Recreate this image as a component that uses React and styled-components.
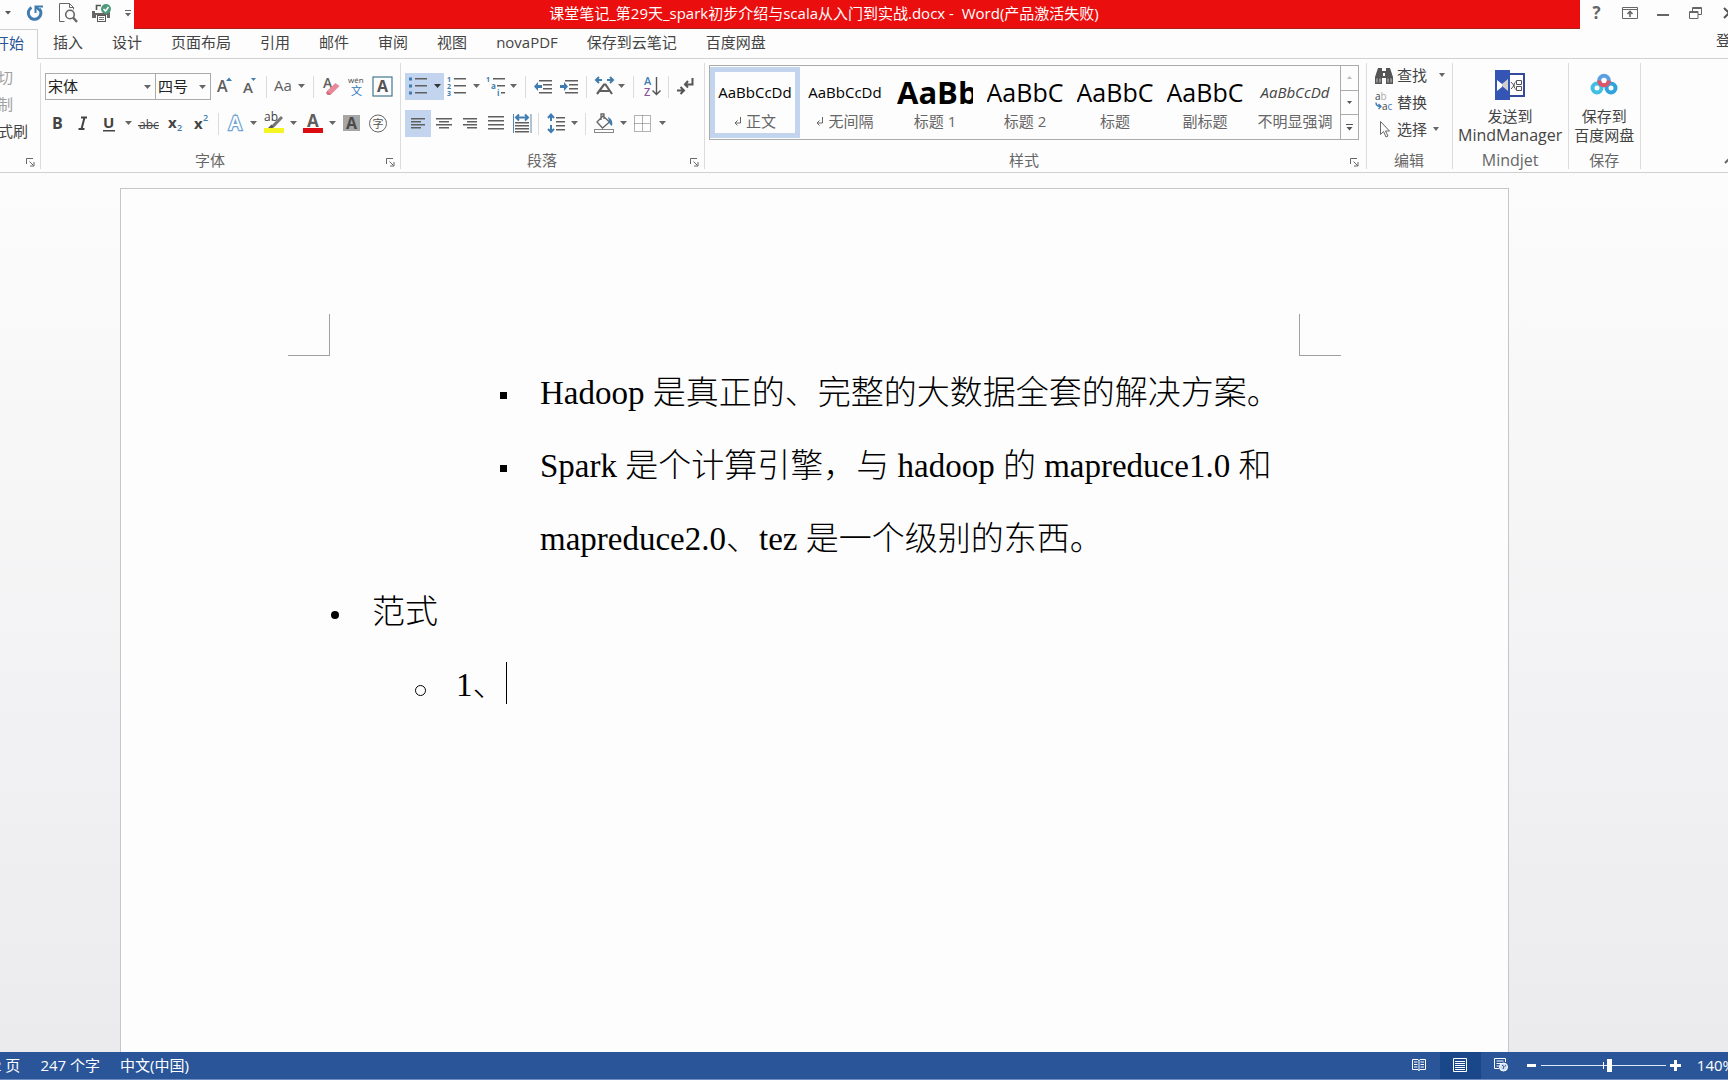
import React, { useState } from "react";
import styled, { createGlobalStyle } from "styled-components";

const GlobalStyle = createGlobalStyle`
  * {
    box-sizing: border-box;
  }
  body {
    margin: 0;
    overflow: hidden;
    font-family: "Open Sans", "Noto Sans CJK SC", sans-serif;
    font-size: 15px;
    line-height: 20px;
    color: #444;
    background: #fdfdfd;
  }
  button, select {
    font: inherit;
    color: inherit;
    margin: 0;
    padding: 0;
    border: 0;
    background: none;
  }
  svg {
    display: block;
    flex-shrink: 0;
  }
  svg text {
    font-family: "Open Sans", "Noto Sans CJK SC", sans-serif;
  }
`;

const BLUE = "#3f7cb0";
const GREY = "#5f5f5f";

const tabs = [
  "开始",
  "插入",
  "设计",
  "页面布局",
  "引用",
  "邮件",
  "审阅",
  "视图",
  "novaPDF",
  "保存到云笔记",
  "百度网盘",
];

const styleItems = [
  { name: "正文", sample: "AaBbCcDd", mark: true },
  { name: "无间隔", sample: "AaBbCcDd", mark: true },
  { name: "标题 1", sample: "AaBb", size: 31, bold: true },
  { name: "标题 2", sample: "AaBbC", size: 25 },
  { name: "标题", sample: "AaBbC", size: 25 },
  { name: "副标题", sample: "AaBbC", size: 25 },
  { name: "不明显强调", sample: "AaBbCcDd", italic: true },
];

const caretPath = (x, y) => `M${x - 3} ${y}h7l-3.5 4z`;

const Lines = ({ rows, color = GREY }) =>
  rows.map(([x, y, w]) => (
    <rect key={`${x}-${y}`} x={x} y={y} width={w} height="1.5" fill={color} />
  ));

const Tool = ({ label, w, caret, active, children }) => (
  <ToolButton type="button" aria-label={label} title={label} $active={active}>
    <svg width={w} height="27" viewBox={`0 0 ${w} 27`} fill="none">
      {children}
      {caret && <path d={caretPath(caret, 11)} fill={active ? "#333" : "#666"} />}
    </svg>
  </ToolButton>
);

const Group = ({ label, launcher, end, children }) => (
  <GroupBox $end={end}>
    <GroupBody>{children}</GroupBody>
    <GroupFooter>
      <span>{label}</span>
      {launcher && (
        <Launcher type="button" aria-label="更多设置">
          <svg width="9" height="9" viewBox="0 0 9 9" fill="none" stroke="#666">
            <path d="M.5 6V.5H7M3.5 3.5l4 4M8 4v4H4" />
          </svg>
        </Launcher>
      )}
    </GroupFooter>
  </GroupBox>
);

const Combo = ({ label, width, options }) => (
  <ComboBox $width={width}>
    <select aria-label={label}>
      {options.map((o) => (
        <option key={o}>{o}</option>
      ))}
    </select>
    <svg width="7" height="4" viewBox="0 0 7 4">
      <path d="M0 0h7l-3.5 4z" fill="#666" />
    </svg>
  </ComboBox>
);

const TitleBar = () => (
  <TitleRow>
    <QuickAccess>
      <QuickButton type="button" aria-label="撤消选项" $w={16}>
        <svg width="7" height="4" viewBox="0 0 7 4">
          <path d="M0 0h6l-3 3.5z" fill="#555" />
        </svg>
      </QuickButton>
      <QuickButton type="button" aria-label="重复" $w={38}>
        <svg width="18" height="18" viewBox="0 0 18 18" fill="none" stroke={BLUE}>
          <path d="M5.500 3.500A6.300 6.300 0 1 0 13.500 5" strokeWidth="3" />
          <path d="M9.500 9V2.500H17" strokeWidth="2" />
          <path d="M10 3l4 3.500" strokeWidth="2.500" />
        </svg>
      </QuickButton>
      <QuickButton type="button" aria-label="打印预览" $w={28}>
        <svg width="19" height="20" viewBox="0 0 19 20" fill="none" stroke="#666">
          <path d="M5.5 18.5H.5V.5H10.5L14.5 4.5V6.5M10.5.5V4.5H14.5" />
          <circle cx="11" cy="11.5" r="4.3" strokeWidth="1.6" />
          <path d="M14 14.5L18 19" strokeWidth="2.4" />
        </svg>
      </QuickButton>
      <QuickButton type="button" aria-label="快速打印" $w={40}>
        <svg width="20" height="19" viewBox="0 0 20 19" fill="none">
          <path d="M4.500 6V1.500H9" stroke="#555" strokeWidth="1.600" />
          <path d="M0 7h3v2h12V7h3v7h-3v-3H4v3H0z" fill="#666" />
          <rect x="5.500" y="11.500" width="8" height="6" fill="#fdfdfd" stroke="#555" />
          <path d="M7 13.500h5M7 15.500h5" stroke="#777" />
          <circle cx="14" cy="5" r="5" fill="#4d9b7c" />
          <path d="M11.500 5l2 2 3-4" stroke="#fff" strokeWidth="1.500" />
        </svg>
      </QuickButton>
      <QuickButton type="button" aria-label="自定义快速访问工具栏" $w={12}>
        <svg width="6" height="7" viewBox="0 0 6 7">
          <path d="M0 0h6v1H0zM0 3h6l-3 3.500z" fill="#666" />
        </svg>
      </QuickButton>
    </QuickAccess>
    <Title>课堂笔记_第29天_spark初步介绍与scala从入门到实战.docx -&nbsp; Word(产品激活失败)</Title>
    <WindowButtons>
      <WindowButton type="button" aria-label="帮助">
        <b>?</b>
      </WindowButton>
      <WindowButton type="button" aria-label="功能区显示选项">
        <svg width="16" height="12" viewBox="0 0 16 12" fill="none" stroke="#666">
          <path d="M.5.5h15v11H.5zM1 2.500h14" />
          <path d="M8 10V5M5.500 7L8 4.500 10.500 7" strokeWidth="1.600" />
        </svg>
      </WindowButton>
      <WindowButton type="button" aria-label="最小化">
        <svg width="12" height="12" viewBox="0 0 12 12">
          <rect y="7" width="12" height="2" fill="#666" />
        </svg>
      </WindowButton>
      <WindowButton type="button" aria-label="向下还原">
        <svg width="13" height="12" viewBox="0 0 13 12" fill="none" stroke="#666">
          <path d="M.5 4.500h8.500v7H.5zM.5 5.500h8.500M3.500 4V.5h9v7H9M3.500 1.500h9" />
        </svg>
      </WindowButton>
      <WindowButton type="button" aria-label="关闭">
        <svg width="12" height="12" viewBox="0 0 12 12" stroke="#555" strokeWidth="2">
          <path d="M1 1l10 10M11 1L1 11" />
        </svg>
      </WindowButton>
    </WindowButtons>
  </TitleRow>
);

const FontGroup = () => (
  <Group label="字体" launcher>
    <ToolRow>
      <Combo label="字体" width={111} options={["宋体", "黑体", "楷体"]} />
      <Combo label="字号" width={56} options={["四号", "小四", "五号"]} />
      <Tool label="增大字号" w={26}>
        <text x="6" y="19" fontSize="16" fontWeight="600" fill={GREY}>A</text>
        <path d="M15 8l3-3.500 3 3.500z" fill={BLUE} />
      </Tool>
      <Tool label="减小字号" w={26}>
        <text x="6" y="20" fontSize="15" fontWeight="600" fill={GREY}>A</text>
        <path d="M14 5l2.500 3 2.500-3z" fill={BLUE} />
      </Tool>
      <Divider />
      <Tool label="更改大小写" w={40} caret={31}>
        <text x="4" y="18" fontSize="15" fill={GREY}>Aa</text>
      </Tool>
      <Divider />
      <Tool label="清除格式" w={26}>
        <text x="6" y="15" fontSize="14" fontWeight="600" fill={GREY}>A</text>
        <path d="M10.500 17.500l8-7.500 4 3-8 8z" fill="#e8899a" />
        <path d="M10.500 17.500l4 3.500-1.500 1h-2.500l-1.500-2z" fill="#d86a80" />
      </Tool>
      <Tool label="拼音指南" w={26}>
        <text x="5" y="10" fontSize="8" fill="#444">wén</text>
        <text x="8" y="22" fontSize="11" fill="#2f77b8">文</text>
      </Tool>
      <Tool label="字符边框" w={26}>
        <rect x="4" y="4" width="19" height="19" stroke="#45788f" strokeWidth="1.200" />
        <text x="8" y="19" fontSize="16" fontWeight="700" fill="#555">A</text>
      </Tool>
    </ToolRow>
    <ToolRow>
      <Tool label="加粗" w={24}>
        <text x="7" y="19" fontSize="16" fontWeight="700" fill="#444">B</text>
      </Tool>
      <Tool label="倾斜" w={26}>
        <path d="M12 7.500h6M9.500 19h6M15.500 7.500l-3 11.500" stroke="#444" strokeWidth="2" />
      </Tool>
      <Tool label="下划线" w={40} caret={33}>
        <text x="8" y="18" fontSize="15" fontWeight="700" fill="#444">U</text>
        <rect x="8" y="20" width="12" height="1.500" fill="#444" />
      </Tool>
      <Tool label="删除线" w={28}>
        <text x="4" y="19" fontSize="12" fill="#444">abc</text>
        <rect x="3" y="15" width="21" height="1.200" fill="#444" />
      </Tool>
      <Tool label="下标" w={26}>
        <text x="5" y="18" fontSize="15" fontWeight="700" fill="#444">x</text>
        <text x="14" y="21" fontSize="9" fontWeight="600" fill={BLUE}>2</text>
      </Tool>
      <Tool label="上标" w={26}>
        <text x="5" y="19" fontSize="15" fontWeight="700" fill="#444">x</text>
        <text x="14" y="11" fontSize="9" fontWeight="600" fill={BLUE}>2</text>
      </Tool>
      <Divider />
      <Tool label="文本效果" w={38} caret={31}>
        <text
          x="7"
          y="20"
          fontSize="19"
          fontWeight="600"
          fill="#fff"
          stroke="#6fa3d6"
          strokeWidth="2.500"
          paintOrder="stroke"
        >
          A
        </text>
      </Tool>
      <Tool label="突出显示" w={40} caret={33}>
        <text x="4" y="11" fontSize="12" fill="#444">ab</text>
        <path d="M12 15L21 6l2 2-8.500 9z" fill="#777" />
        <path d="M8 18l3.500-3.500 3 2.500-2 1z" fill="#555" />
        <rect x="4" y="18" width="20" height="5" fill="#f4f522" />
      </Tool>
      <Tool label="字体颜色" w={40} caret={32}>
        <text x="7" y="17" fontSize="17" fontWeight="700" fill={GREY}>A</text>
        <rect x="3" y="18" width="20" height="5" fill="#dc0d12" />
      </Tool>
      <Tool label="字符底纹" w={24}>
        <rect x="3" y="5" width="17" height="16" fill="#a6a6a6" />
        <text x="6" y="19" fontSize="16" fontWeight="700" fill="#4a4a4a">A</text>
      </Tool>
      <Tool label="带圈字符" w={28}>
        <circle cx="14" cy="13.500" r="8.500" stroke="#666" />
        <text x="8.500" y="18" fontSize="11" fill="#555">字</text>
      </Tool>
    </ToolRow>
  </Group>
);

const ParagraphGroup = () => (
  <Group label="段落" launcher>
    <ToolRow>
      <Tool label="项目符号" w={39} caret={32} active>
        <path d="M4 4.500h3v3H4zM4 11.500h3v3H4zM4 18.500h3v3H4z" fill={BLUE} />
        <Lines rows={[[10, 5, 12], [10, 12, 12], [10, 19, 12]]} />
      </Tool>
      <Tool label="编号" w={39} caret={32}>
        <text x="3" y="9" fontSize="7" fontWeight="700" fill={BLUE}>1</text>
        <text x="3" y="16" fontSize="7" fontWeight="700" fill={BLUE}>2</text>
        <text x="3" y="23" fontSize="7" fontWeight="700" fill={BLUE}>3</text>
        <Lines rows={[[10, 5, 12], [10, 12, 12], [10, 19, 12]]} />
      </Tool>
      <Tool label="多级列表" w={39} caret={30}>
        <text x="3" y="9" fontSize="7" fontWeight="700" fill={BLUE}>1</text>
        <text x="8" y="16" fontSize="8" fontWeight="700" fill={BLUE}>a</text>
        <text x="14" y="23" fontSize="8" fontWeight="700" fill={BLUE}>i</text>
        <Lines rows={[[10, 5, 12], [14, 12, 8], [18, 19, 4]]} />
      </Tool>
      <Divider />
      <Tool label="减少缩进量" w={27}>
        <path d="M13 12v3H9v3l-4-4.500L9 9v3z" fill={BLUE} />
        <Lines rows={[[10, 7, 13], [14, 11, 9], [14, 15, 9], [10, 19, 13]]} />
      </Tool>
      <Tool label="增加缩进量" w={27}>
        <path d="M4 12v3h4v3l4-4.500L8 9v3z" fill={BLUE} />
        <Lines rows={[[9, 7, 13], [13, 11, 9], [13, 15, 9], [9, 19, 13]]} />
      </Tool>
      <Divider />
      <Tool label="中文版式" w={40} caret={31}>
        <path d="M7 21L14 11.500h1.500L22 21M10 18h9" stroke={GREY} strokeWidth="2.200" />
        <path d="M12 7H6M9 4L6 7l3 3M17 7h6M20 4l3 3-3 3" stroke={BLUE} strokeWidth="2" />
      </Tool>
      <Divider />
      <Tool label="排序" w={28}>
        <text x="7" y="12" fontSize="11" fontWeight="600" fill={BLUE}>A</text>
        <text x="7" y="23" fontSize="11" fontWeight="600" fill="#8a569e">Z</text>
        <path d="M19.500 4v17M15.500 17.500l4 4 4-4" stroke="#555" strokeWidth="1.400" />
      </Tool>
      <Divider />
      <Tool label="显示编辑标记" w={27}>
        <path d="M5 17.500h6M8.500 14l3.500 3.500L8.500 21" stroke="#555" strokeWidth="2" />
        <path d="M20.500 5v6.500H14M16 8l-3 3.500 3 3" stroke="#555" strokeWidth="2" />
      </Tool>
    </ToolRow>
    <ToolRow>
      <Tool label="左对齐" w={26} active>
        <Lines rows={[[6, 8, 14], [6, 11, 10], [6, 14, 14], [6, 17, 10]]} />
      </Tool>
      <Tool label="居中" w={26}>
        <Lines rows={[[5, 8, 16], [8, 11, 10], [5, 14, 16], [8, 17, 10]]} />
      </Tool>
      <Tool label="右对齐" w={26}>
        <Lines rows={[[6, 8, 14], [10, 11, 10], [6, 14, 14], [10, 17, 10]]} />
      </Tool>
      <Tool label="两端对齐" w={26}>
        <Lines rows={[[5, 6, 16], [5, 10, 16], [5, 14, 16], [5, 18, 16]]} />
      </Tool>
      <Tool label="分散对齐" w={26}>
        <path d="M4.500 4v19M22 4v19" stroke="#5b87ad" />
        <path d="M7 7.500h12M10 4.500l-3 3 3 3M16 4.500l3 3-3 3" stroke={BLUE} strokeWidth="2" />
        <Lines rows={[[6, 12, 14], [6, 15, 14], [6, 18, 14], [6, 21, 14]]} />
      </Tool>
      <Divider />
      <Tool label="行和段落间距" w={40} caret={32}>
        <path d="M9 5v6M6 8l3-3.500L12 8M9 15v7M6 19l3 3 3-3" stroke={BLUE} strokeWidth="2" />
        <Lines rows={[[14, 7, 9], [14, 11, 9], [14, 15, 9], [14, 19, 9]]} />
      </Tool>
      <Divider />
      <Tool label="底纹" w={41} caret={34}>
        <path d="M8 12l6-6 6.500 6-7 6zM12 10V4h3v5" stroke="#666" strokeWidth="1.300" />
        <path d="M19 7c4 2 5 5 4 9-2-1-3-3-3-5z" fill={BLUE} />
        <rect x="5.500" y="19.500" width="19" height="3" stroke="#888" fill="#fff" />
      </Tool>
      <Tool label="边框" w={40} caret={32}>
        <path d="M4.500 5.500h16v16h-16zM12.500 5.500v16M4.500 13.500h16" stroke="#666" strokeDasharray="1 1" />
      </Tool>
    </ToolRow>
  </Group>
);

const StylesGroup = () => {
  const [current, setCurrent] = useState("正文");
  return (
    <Group label="样式" launcher end={7}>
      <Gallery>
        {styleItems.map((s) => (
          <StyleCard
            key={s.name}
            type="button"
            $active={s.name === current}
            onClick={() => setCurrent(s.name)}
          >
            <Sample $size={s.size} $bold={s.bold} $italic={s.italic}>
              {s.sample}
            </Sample>
            <StyleName>
              {s.mark && (
                <svg width="8" height="9" viewBox="0 0 8 9" fill="none" stroke="#666">
                  <path d="M6.500 0v6H1M3.500 3.500L1 6l2.500 2.500" />
                </svg>
              )}
              {s.name}
            </StyleName>
          </StyleCard>
        ))}
        <GalleryScroll>
          <button type="button" aria-label="上一行">
            <svg width="5" height="4" viewBox="0 0 5 4">
              <path d="M0 3h5L2.500 0z" fill="#bbb" />
            </svg>
          </button>
          <button type="button" aria-label="下一行">
            <svg width="5" height="4" viewBox="0 0 5 4">
              <path d="M0 0h5L2.500 3z" fill="#555" />
            </svg>
          </button>
          <button type="button" aria-label="其他样式">
            <svg width="7" height="7" viewBox="0 0 7 7">
              <path d="M0 0h7v1H0zM.5 3h6l-3 3.500z" fill="#555" />
            </svg>
          </button>
        </GalleryScroll>
      </Gallery>
    </Group>
  );
};

const EditGroup = () => (
  <Group label="编辑">
    <EditList>
      <TextTool type="button">
        <svg width="18" height="17" viewBox="0 0 18 17" fill="#555">
          <path d="M3 1h4v3h4V1h4l3 9v7h-7v-6H7v6H0v-7zM8 6v3h2V6z" fillRule="evenodd" />
          <path d="M2 11.500v4M5 11.500v4M13 11.500v4M16 11.500v4" stroke="#ccc" />
        </svg>
        查找
        <Caret $gap={8} />
      </TextTool>
      <TextTool type="button">
        <svg width="18" height="20" viewBox="0 0 18 20" fill="none">
          <text x="0" y="8" fontSize="10" fill="#444">
            a<tspan fill="#aaa">b</tspan>
          </text>
          <text x="7" y="18" fontSize="10" fill="#444">
            a<tspan fill={BLUE}>c</tspan>
          </text>
          <path d="M1 10.500c0 3 2 4 5 4M3.500 12L6 14.500 3.500 17" stroke={BLUE} strokeWidth="1.400" />
        </svg>
        替换
      </TextTool>
      <TextTool type="button">
        <svg width="18" height="18" viewBox="0 0 18 18" fill="none" stroke="#666">
          <path d="M5.500 1.500v13l3-3 2.500 5.500 2-1-2.500-5h4z" />
        </svg>
        选择
        <Caret $gap={2} />
      </TextTool>
    </EditList>
  </Group>
);

const AddinGroups = () => (
  <>
    <Group label={<Wide>Mindjet</Wide>}>
      <BigButton type="button">
        <svg width="30" height="30" viewBox="0 0 30 30" fill="none">
          <path d="M14 4h15v22H14" stroke="#35499c" strokeWidth="2" fill="#fff" />
          <rect width="15" height="30" fill="#3555b5" />
          <path d="M2 10l5 4v3l-5 4z" fill="#fff" />
          <path d="M7 14l6-5v12l-6-5z" fill="#d0d0d0" />
          <path d="M16 12l3 3.500-3 3.500M22 11.500c-4 0-4 8 0 8M19 15.500h-1" stroke="#555" />
          <path d="M21.500 10.500h5v4h-5zM21.500 16.500h5v4h-5z" stroke="#555" />
        </svg>
        <span>
          发送到
          <br />
          <Wide>MindManager</Wide>
        </span>
      </BigButton>
    </Group>
    <Group label="保存">
      <BigButton type="button">
        <svg width="28" height="30" viewBox="0 0 28 30" fill="none" strokeWidth="4">
          <circle cx="7" cy="18" r="4.500" stroke="#40bfe3" />
          <circle cx="21" cy="18" r="4.500" stroke="#2fa4dc" />
          <circle cx="14" cy="10.500" r="4.800" stroke="#5c9fe0" />
          <path d="M9.200 10.500a4.800 4.800 0 0 0 9.600 0" stroke="#e05365" />
        </svg>
        <span>
          保存到
          <br />
          百度网盘
        </span>
      </BigButton>
    </Group>
  </>
);

const StatusBar = () => {
  const [zoom, setZoom] = useState(55);
  return (
    <Status>
      <StatusText>第 2 页</StatusText>
      <StatusText>247 个字</StatusText>
      <StatusText>中文(中国)</StatusText>
      <StatusRight>
        <ViewButton type="button" aria-label="阅读视图">
          <svg width="14" height="14" viewBox="0 0 14 14" fill="none" stroke="#fff">
            <path d="M.5 1.500H6L7 2.500 8 1.500h5.500v10H8l-1 1-1-1H.5zM7 2v11M2 4h3.500M2 6.500h3.500M2 9h3.500M8.500 4H12M8.500 6.500H12M8.500 9H12" />
          </svg>
        </ViewButton>
        <ViewButton type="button" aria-label="页面视图" $active>
          <svg width="14" height="14" viewBox="0 0 14 14" fill="none" stroke="#fff">
            <path d="M.5.5h13v13H.5zM2 3.500h10M2 5.500h10M2 7.500h10M2 9.500h10M2 11.500h10" />
          </svg>
        </ViewButton>
        <ViewButton type="button" aria-label="Web 版式视图">
          <svg width="14" height="14" viewBox="0 0 14 14" fill="none" stroke="#fff">
            <path d="M5 10.500H.5V.5h11V4M2.500 3h7M2.500 5.500h5M2.500 8h3" />
            <circle cx="9.500" cy="9" r="4" fill="#cfdcf0" />
            <path d="M8 7l2 1.500L9 11M12 7l-1 1.500" stroke="#2a5699" />
          </svg>
        </ViewButton>
        <ZoomButton type="button" aria-label="缩小" onClick={() => setZoom(zoom - 5)}>
          <svg width="11" height="11" viewBox="0 0 11 11">
            <path d="M1 4h9v3H1z" fill="#fff" />
          </svg>
        </ZoomButton>
        <ZoomSlider
          type="range"
          aria-label="显示比例"
          min="0"
          max="100"
          value={zoom}
          onChange={(e) => setZoom(Number(e.target.value))}
        />
        <ZoomButton type="button" aria-label="放大" onClick={() => setZoom(zoom + 5)}>
          <svg width="11" height="11" viewBox="0 0 11 11">
            <path d="M0 4h4V0h3v4h4v3H7v4H4V7H0z" fill="#fff" />
          </svg>
        </ZoomButton>
        <ZoomValue>140%</ZoomValue>
      </StatusRight>
    </Status>
  );
};

const App = () => (
  <Window>
    <GlobalStyle />
    <TitleBar />
    <TabRow>
      {tabs.map((t, i) => (
        <Tab key={t} type="button" $active={i === 0}>
          {t}
        </Tab>
      ))}
      <SignIn href="#login">登录</SignIn>
    </TabRow>
    <Ribbon>
      <Group label="" launcher>
        <Clipboard>
          <ClipButton type="button" disabled>剪切</ClipButton>
          <ClipButton type="button" disabled>复制</ClipButton>
          <ClipButton type="button">格式刷</ClipButton>
        </Clipboard>
      </Group>
      <FontGroup />
      <ParagraphGroup />
      <StylesGroup />
      <EditGroup />
      <AddinGroups />
      <Collapse type="button" aria-label="折叠功能区">
        <svg width="10" height="6" viewBox="0 0 10 6" fill="none" stroke="#666" strokeWidth="2">
          <path d="M1 5l4-4 4 4" />
        </svg>
      </Collapse>
    </Ribbon>
    <Workspace>
      <Page>
        <Margins>
          <Corner />
          <Corner $right />
        </Margins>
        <DocList>
          <DocItem $level={2}>
            <Marker $kind="square" />
            <p>Hadoop 是真正的、完整的大数据全套的解决方案。</p>
          </DocItem>
          <DocItem $level={2}>
            <Marker $kind="square" />
            <p>Spark 是个计算引擎，与 hadoop 的 mapreduce1.0 和 mapreduce2.0、tez 是一个级别的东西。</p>
          </DocItem>
          <DocItem $level={0}>
            <Marker $kind="disc" />
            <p>范式</p>
          </DocItem>
          <DocItem $level={1}>
            <Marker $kind="circle" />
            <p>1、</p>
            <TextCursor />
          </DocItem>
        </DocList>
      </Page>
    </Workspace>
    <StatusBar />
  </Window>
);

export default App;

const Window = styled.div`
  display: flex;
  flex-direction: column;
  height: 100vh;
  overflow: hidden;
`;

const TitleRow = styled.header`
  display: flex;
  height: 29px;
  flex-shrink: 0;
`;
const QuickAccess = styled.div`
  display: flex;
`;
const QuickButton = styled.button`
  display: flex;
  align-items: center;
  justify-content: center;
  width: ${(p) => p.$w}px;
  height: 26px;
`;
const Title = styled.div`
  flex: 1;
  padding: 3px 66px 0 0;
  text-align: center;
  white-space: nowrap;
  color: #fff;
  background: #eb0e0e;
  border-bottom: 1px solid #a8201c;
`;
const WindowButtons = styled.div`
  display: flex;
  margin-right: -17px;
`;
const WindowButton = styled.button`
  display: flex;
  align-items: center;
  justify-content: center;
  width: 33px;
  height: 26px;
  color: #666;
  b {
    font-size: 17px;
  }
`;

const TabRow = styled.nav`
  display: flex;
  gap: 1px;
  height: 30px;
  flex-shrink: 0;
  margin-left: -20px;
  border-bottom: 1px solid #d0d0d0;
`;
const Tab = styled.button`
  height: 30px;
  padding: 0 14px 4px;
  white-space: nowrap;
  color: ${(p) => (p.$active ? "#2a5699" : "#444")};
  ${(p) =>
    p.$active &&
    `
    background: #fdfdfd;
    border: solid #d0d0d0;
    border-width: 1px 1px 0 0;
    padding-right: 13px;
  `}
`;
const SignIn = styled.a`
  margin: 1px -18px 0 auto;
  color: #444;
  text-decoration: none;
`;

const Ribbon = styled.div`
  display: flex;
  height: 114px;
  flex-shrink: 0;
  padding: 4px 0 3px;
  border-bottom: 1px solid #d0d0d0;
`;
const GroupBox = styled.section`
  display: flex;
  flex-direction: column;
  flex-shrink: 0;
  padding: 0 ${(p) => p.$end || 5}px 0 4px;
  border-right: 1px solid #dcdcdc;
`;
const GroupBody = styled.div`
  display: flex;
  flex-direction: column;
  gap: 10px;
  flex: 1;
`;
const GroupFooter = styled.div`
  display: flex;
  align-items: center;
  height: 18px;
  color: #666;
  > span {
    flex: 1;
    text-align: center;
  }
`;
const Wide = styled.span`
  font-size: 16px;
`;
const Launcher = styled.button`
  display: flex;
  justify-content: flex-end;
  width: 20px;
  padding-top: 4px;
`;
const ToolRow = styled.div`
  display: flex;
  align-items: center;
  height: 27px;
  &:first-child {
    margin-top: 10px;
  }
`;
const ToolButton = styled.button`
  background: ${(p) => (p.$active ? "#c3d5ee" : "transparent")};
  &:hover {
    background: #d5e1f2;
  }
`;
const Divider = styled.span`
  width: 1px;
  height: 22px;
  margin: 0 3px;
  background: #dcdcdc;
`;
const ComboBox = styled.div`
  display: grid;
  align-items: center;
  width: ${(p) => p.$width}px;
  height: 27px;
  border: 1px solid #ababab;
  & + & {
    margin-left: -1px;
  }
  select {
    grid-area: 1 / 1;
    height: 25px;
    padding: 0 0 2px 2px;
    color: #222;
    appearance: none;
    outline: none;
  }
  svg {
    grid-area: 1 / 1;
    justify-self: end;
    margin-right: 4px;
    pointer-events: none;
  }
`;

const Clipboard = styled.div`
  display: flex;
  flex-direction: column;
  width: 52px;
  margin-left: -21px;
`;
const ClipButton = styled.button`
  height: 27px;
  white-space: nowrap;
  text-align: left;
  color: ${(p) => (p.disabled ? "#a0a0a0" : "#444")};
`;

const Gallery = styled.div`
  display: flex;
  height: 75px;
  margin-top: 2px;
  border: 1px solid #ababab;
`;
const StyleCard = styled.button`
  display: flex;
  flex-direction: column;
  align-items: center;
  width: 90px;
  height: 71px;
  margin-top: 1px;
  border: 5px solid ${(p) => (p.$active ? "#c3d5ee" : "transparent")};
`;
const Sample = styled.span`
  display: flex;
  align-items: center;
  justify-content: ${(p) => (p.$bold ? "flex-start" : "center")};
  width: 76px;
  height: 39px;
  overflow: hidden;
  white-space: nowrap;
  font-size: ${(p) => p.$size || 15}px;
  font-weight: ${(p) => (p.$bold ? 700 : 400)};
  font-style: ${(p) => (p.$italic ? "italic" : "normal")};
  color: ${(p) => (p.$italic ? "#444" : "#000")};
`;
const StyleName = styled.span`
  display: flex;
  align-items: center;
  gap: 4px;
  white-space: nowrap;
  color: #666;
`;
const GalleryScroll = styled.div`
  display: flex;
  flex-direction: column;
  width: 18px;
  border-left: 1px solid #ababab;
  button {
    flex: 1;
    display: flex;
    align-items: center;
    justify-content: center;
  }
  button + button {
    border-top: 1px solid #ababab;
  }
`;

const EditList = styled.div`
  display: flex;
  flex-direction: column;
  padding: 0 4px;
`;
const TextTool = styled.button`
  display: flex;
  align-items: center;
  gap: 4px;
  width: 68px;
  height: 27px;
  padding-bottom: 3px;
  white-space: nowrap;
`;
const Caret = styled.i`
  margin-left: ${(p) => p.$gap}px;
  border: solid transparent;
  border-top-color: #666;
  border-width: 4px 3px 0;
`;
const BigButton = styled.button`
  display: flex;
  flex-direction: column;
  align-items: center;
  gap: 7px;
  padding: 7px 1px 0;
  span {
    line-height: 19px;
  }
`;
const Collapse = styled.button`
  align-self: flex-end;
  height: 16px;
  margin: 0 -6px 0 auto;
`;

const Workspace = styled.main`
  display: flex;
  flex: 1;
  min-height: 0;
  padding: 15px 219px 0 120px;
  background: linear-gradient(#fcfcfc, #ebebee);
`;
const Page = styled.article`
  flex: 1;
  padding: 125px 167px 0;
  background: #fdfdfd;
  border: 1px solid #c6c6c9;
  border-bottom: 0;
`;
const Margins = styled.div`
  display: flex;
  justify-content: space-between;
`;
const Corner = styled.span`
  width: 42px;
  height: 42px;
  border-bottom: 1px solid #a0a0a0;
  ${(p) => (p.$right ? "border-left" : "border-right")}: 1px solid #a0a0a0;
`;
const DocList = styled.ul`
  margin: 0;
  padding: 1px 42px 0;
  list-style: none;
  font-family: "Liberation Serif", "Noto Sans CJK SC", serif;
  font-size: 33px;
  font-weight: 300;
  line-height: 73px;
  color: #000;
`;
const DocItem = styled.li`
  display: flex;
  padding-left: ${(p) => p.$level * 84}px;
  p {
    margin: 0;
  }
`;
const markers = {
  square: "width: 7px; height: 7px; margin: 35px 33px 0 2px; background: #000;",
  disc: "width: 8px; height: 8px; margin: 35px 33px 0 1px; border-radius: 50%; background: #000;",
  circle: "width: 11px; height: 11px; margin: 36px 30px 0 1px; border-radius: 50%; border: 1px solid #000;",
};
const Marker = styled.span`
  flex-shrink: 0;
  ${(p) => markers[p.$kind]}
`;
const TextCursor = styled.span`
  width: 1px;
  height: 42px;
  margin-top: 13px;
  background: #000;
`;

const Status = styled.footer`
  display: flex;
  align-items: center;
  gap: 20px;
  height: 28px;
  flex-shrink: 0;
  color: #fff;
  background: #2a5699;
  border-bottom: 1px solid #6f8dc0;
`;
const StatusText = styled.span`
  padding-bottom: 2px;
  white-space: nowrap;
  &:first-child {
    margin-left: -26px;
  }
`;
const StatusRight = styled.div`
  display: flex;
  align-items: center;
  margin: 0 -7px 0 auto;
`;
const ViewButton = styled.button`
  display: flex;
  align-items: center;
  justify-content: center;
  width: 41px;
  height: 27px;
  padding-bottom: 2px;
  background: ${(p) => (p.$active ? "#19478a" : "transparent")};
`;
const ZoomButton = styled.button`
  display: flex;
  align-items: center;
  justify-content: center;
  width: 19px;
  height: 27px;
`;
const ZoomSlider = styled.input`
  width: 125px;
  height: 14px;
  margin: 0;
  appearance: none;
  background:
    linear-gradient(#fff, #fff) 62px center / 1px 7px no-repeat,
    linear-gradient(#dfe8f5, #dfe8f5) center / 100% 1px no-repeat;
  &::-webkit-slider-thumb {
    appearance: none;
    width: 5px;
    height: 13px;
    background: #fff;
  }
`;
const ZoomValue = styled.span`
  margin-left: 12px;
  padding-bottom: 2px;
`;
